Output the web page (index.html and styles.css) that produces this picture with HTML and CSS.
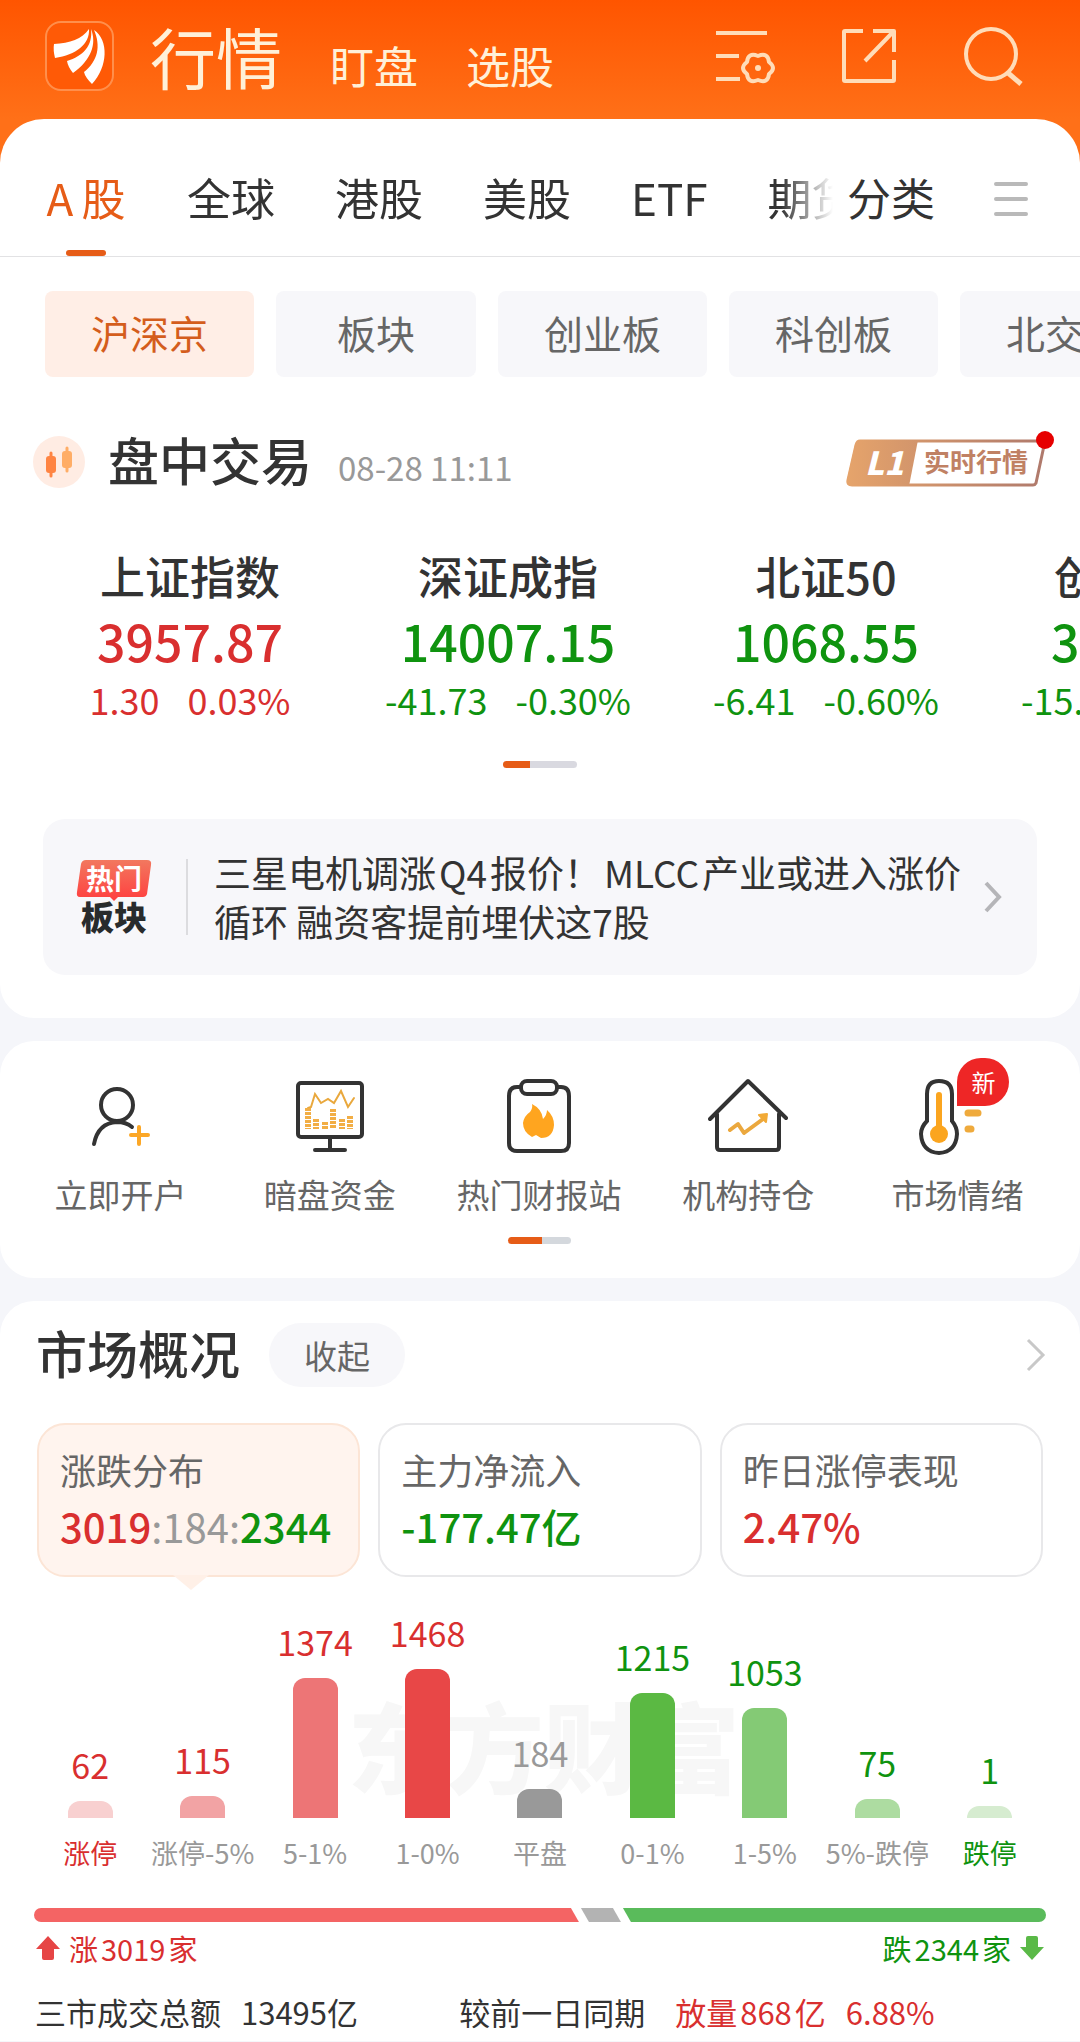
FILE: index.html
```html
<!DOCTYPE html>
<html lang="zh-CN">
<head>
  <meta charset="UTF-8" />
  <title>行情</title>
  <meta name="viewport" content="width=device-width, initial-scale=1.0"/>
  <link rel="stylesheet" href="styles.css">
</head>
<body>

  <header class="header">
    <svg class="logo" viewBox="0 0 70 70" aria-hidden="true">
      <rect x="1" y="1" width="67" height="68" rx="15" fill="#ff5a06" stroke="#ff8f4c" stroke-width="2"/>
      <path d="M9 23C25 22 37 18 44 8C45 23 31 34 10 37Q8 29 9 23Z" fill="#fff"/>
      <path d="M46 8C52 23 46 39 28 52Q23 46 22 40C38 35 48 25 46 8Z" fill="#fff"/>
      <path d="M49 9C64 19 63 46 47 63Q40 56 39 51C53 40 56 25 49 9Z" fill="#fff"/>
    </svg>
    <nav class="header-nav">
      <a class="current" href="#">行情</a>
      <a href="#">盯盘</a>
      <a href="#">选股</a>
    </nav>
    <div class="header-tools">
      <button aria-label="设置">
        <svg viewBox="0 0 60 60" fill="none" stroke="#ffdcb8" stroke-width="4">
          <path d="M1 7H52M1 30H24M1 53H25"/>
          <path d="M54 48Q53 58 43 54Q33 58 32 48Q24 42 32 36Q33 26 43 30Q53 26 54 36Q62 42 54 48Z" stroke-linejoin="round"/>
          <circle cx="43" cy="42" r="3" fill="#ffdcb8" stroke="none"/>
        </svg>
      </button>
      <button aria-label="分享">
        <svg viewBox="0 0 60 60" fill="none" stroke="#ffdcb8" stroke-width="4" stroke-linejoin="round">
          <path d="M24 5H6Q5 5 5 6V54Q5 55 6 55H54Q55 55 55 54V34"/>
          <path d="M34 5H55V26M55 5L26 35"/>
        </svg>
      </button>
      <button aria-label="搜索">
        <svg viewBox="0 0 60 60" fill="none" stroke="#ffdcb8" stroke-width="4">
          <circle cx="28" cy="28" r="25"/>
          <path d="M44 46L58 58" stroke-width="5"/>
        </svg>
      </button>
    </div>
  </header>

  <main>
    <section class="panel panel-index">
      <div class="tabs">
        <nav class="tabs-scroll">
          <a class="active" href="#"><span class="latin">A</span>股</a>
          <a href="#">全球</a>
          <a href="#">港股</a>
          <a href="#">美股</a>
          <a href="#">ETF</a>
          <a href="#">期货</a>
        </nav>
        <a href="#">分类</a>
        <button class="tabs-menu" aria-label="菜单">
          <svg viewBox="0 0 34 36" stroke="#b9b9b9" stroke-width="4" stroke-linecap="round">
            <path d="M2 3H32M2 18H32M2 33H32"/>
          </svg>
        </button>
      </div>

      <div class="chips">
        <button class="chip on">沪深京</button>
        <button class="chip">板块</button>
        <button class="chip">创业板</button>
        <button class="chip">科创板</button>
        <button class="chip">北交所</button>
      </div>

      <div class="session">
        <svg class="session-icon" viewBox="0 0 52 52" aria-hidden="true">
          <circle cx="26" cy="26" r="26" fill="#ffece3"/>
          <path d="M18 17V40" stroke="#ff8442" stroke-width="3" stroke-linecap="round"/>
          <rect x="13" y="20" width="10" height="17" rx="3" fill="#ff8442"/>
          <path d="M34 12V35" stroke="#ffad66" stroke-width="3" stroke-linecap="round"/>
          <rect x="29" y="15" width="10" height="17" rx="3" fill="#ffad66"/>
        </svg>
        <h2>盘中交易</h2>
        <time>08-28 11:11</time>
        <a class="level" href="#" aria-label="L1 实时行情">
          <svg viewBox="0 0 210 58">
            <defs>
              <linearGradient id="gold" gradientUnits="userSpaceOnUse" x1="0" y1="0" x2="205" y2="0">
                <stop offset="0" stop-color="#e6a46b"/>
                <stop offset="1" stop-color="#ad786c"/>
              </linearGradient>
            </defs>
            <path d="M14 11H199L190 53Q189 55 187 55H6Q1 55 2 50L10 15Q11 11 14 11Z" fill="none" stroke="url(#gold)" stroke-width="3"/>
            <path d="M14 10H72L63 56H6Q0 56 1 50L9 15Q11 10 14 10Z" fill="url(#gold)"/>
            <text x="19" y="45" class="level-mark">L1</text>
            <text x="78" y="42" class="level-text">实时行情</text>
            <circle cx="199" cy="10" r="9" fill="#e60000"/>
          </svg>
        </a>
      </div>

      <div class="indexes">
        <a class="index up" href="#">
          <h3>上证指数</h3>
          <strong>3957.87</strong>
          <p><span>1.30</span><span>0.03%</span></p>
        </a>
        <a class="index down" href="#">
          <h3>深证成指</h3>
          <strong>14007.15</strong>
          <p><span>-41.73</span><span>-0.30%</span></p>
        </a>
        <a class="index down" href="#">
          <h3>北证50</h3>
          <strong>1068.55</strong>
          <p><span>-6.41</span><span>-0.60%</span></p>
        </a>
        <a class="index down" href="#">
          <h3>创业板指</h3>
          <strong>3400.00</strong>
          <p><span>-15.00</span><span>-0.40%</span></p>
        </a>
      </div>
      <div class="pager"></div>

      <a class="hot" href="#">
        <svg class="hot-logo" viewBox="0 0 76 76" role="img" aria-label="热门板块">
          <defs>
            <linearGradient id="hot" x1="0" y1="0" x2="0" y2="1">
              <stop offset="0" stop-color="#f2785f"/>
              <stop offset="1" stop-color="#ff3f3f"/>
            </linearGradient>
          </defs>
          <path d="M10 1H71Q76 1 75 6L71 35Q70 38 67 38H42L38 42L34 38H4Q0 38 1 33L5 5Q6 1 10 1Z" fill="url(#hot)"/>
          <text x="10" y="31" class="hot-top">热门</text>
          <text x="5" y="71" class="hot-bottom">板块</text>
        </svg>
        <p>三星电机调涨<span class="num">Q4</span>报价！<span class="num">MLCC</span>产业或进入涨价循环 融资客提前埋伏这7股</p>
        <svg class="arrow" viewBox="0 0 20 34" fill="none" stroke="#b5b5b8" stroke-width="4"><path d="M3 3L16 17L3 31"/></svg>
      </a>
    </section>

    <section class="panel panel-quick">
      <div class="quick">
        <a href="#">
          <svg viewBox="0 0 80 80" fill="none" stroke="#333" stroke-width="4" stroke-linecap="round">
            <circle cx="36" cy="28" r="16"/>
            <path d="M13 67Q17 46 36 45Q45 45 51 50"/>
            <path d="M58 50V67M50 58H67" stroke="#fca726" stroke-width="4"/>
          </svg>
          立即开户
        </a>
        <a href="#">
          <svg viewBox="0 0 80 80" fill="none" stroke="#333" stroke-width="4" stroke-linecap="round">
            <rect x="8" y="6" width="64" height="54" rx="3"/>
            <path d="M40 60V72M25 73H55"/>
            <path d="M18 31L21 30L25 17L31 26L38 22L44 26L51 14L58 30L64 21" stroke="#e9a83d" stroke-width="2"/>
            <path d="M18 31V52M26 42V52M35 45V52M43 32V52M52 42V52M60 39V52" stroke="#f2ae45" stroke-width="6" stroke-linecap="butt" stroke-dasharray="3 1"/>
          </svg>
          暗盘资金
        </a>
        <a href="#">
          <svg viewBox="0 0 80 80" fill="none" stroke="#333" stroke-width="4">
            <path d="M23 10H18Q10 10 10 19V66Q10 74 18 74H62Q70 74 70 66V19Q70 10 62 10H57"/>
            <rect x="22" y="4" width="36" height="13" rx="6"/>
            <path d="M33 27Q43 32 44 42Q48 38 48 33Q55 39 55 48Q54 61 42 61L37 58L33 60Q24 55 24 46Q25 39 31 35Q34 31 33 27Z" fill="#ffa51f" stroke="none"/>
          </svg>
          热门财报站
        </a>
        <a href="#">
          <svg viewBox="0 0 80 80" fill="none" stroke="#333" stroke-width="4" stroke-linecap="round" stroke-linejoin="round">
            <path d="M2 42L40 4L78 41M9 37V70Q9 73 12 73H68Q71 73 71 70V37"/>
            <path d="M22 53L30 47L36 56L55 42" stroke="#eba83e"/>
            <path d="M51 38L59 37L58 45Z" fill="#f2aa36" stroke="#f2aa36" stroke-width="2"/>
          </svg>
          机构持仓
        </a>
        <a href="#">
          <svg viewBox="0 0 80 80" fill="none" stroke="#333" stroke-width="4" stroke-linecap="round">
            <path d="M10 17Q10 4 22 4Q35 4 35 17V44Q40 50 40 57Q39 75 22 76Q5 75 4 57Q4 50 10 44Z"/>
            <path d="M22 18V55" stroke="#fba51f" stroke-width="6"/>
            <circle cx="22" cy="57" r="9" fill="#fba51f" stroke="none"/>
            <path d="M51 36H61M51 52H54" stroke="#efaa3c" stroke-width="7"/>
          </svg>
          市场情绪
          <em class="new">新</em>
        </a>
      </div>
      <div class="pager pager-half"></div>
    </section>

    <section class="panel panel-market">
      <div class="market-head">
        <h2>市场概况</h2>
        <button class="fold">收起</button>
        <a class="more" href="#" aria-label="更多">
          <svg class="arrow" viewBox="0 0 20 34" fill="none" stroke="#c8c8c8" stroke-width="3"><path d="M2 2L17 17L2 32"/></svg>
        </a>
      </div>

      <div class="cards">
        <button class="card selected">
          <span>涨跌分布</span>
          <b><i class="up">3019</i><i class="flat">:184:</i><i class="down">2344</i></b>
        </button>
        <button class="card">
          <span>主力净流入</span>
          <b class="down">-177.47亿</b>
        </button>
        <button class="card">
          <span>昨日涨停表现</span>
          <b class="up">2.47%</b>
        </button>
      </div>

      <div class="chart">
        <div class="watermark" aria-hidden="true">东方财富</div>
        <div class="col up edge"><b>62</b><div class="bar r1" style="height:17px"></div><span>涨停</span></div>
        <div class="col up"><b>115</b><div class="bar r2" style="height:22px"></div><span>涨停-5%</span></div>
        <div class="col up"><b>1374</b><div class="bar r3" style="height:140px"></div><span>5-1%</span></div>
        <div class="col up"><b>1468</b><div class="bar r4" style="height:149px"></div><span>1-0%</span></div>
        <div class="col flat"><b>184</b><div class="bar r0" style="height:29px"></div><span>平盘</span></div>
        <div class="col down"><b>1215</b><div class="bar g4" style="height:125px"></div><span>0-1%</span></div>
        <div class="col down"><b>1053</b><div class="bar g3" style="height:110px"></div><span>1-5%</span></div>
        <div class="col down"><b>75</b><div class="bar g2" style="height:19px"></div><span>5%-跌停</span></div>
        <div class="col down edge"><b>1</b><div class="bar g1" style="height:12px"></div><span>跌停</span></div>
      </div>

      <div class="ratio">
        <div class="ratio-up" style="flex-grow:3019"></div>
        <div class="ratio-flat"></div>
        <div class="ratio-down" style="flex-grow:2344"></div>
      </div>
      <div class="ratio-text">
        <p class="up">
          <svg viewBox="0 0 26 26"><path d="M13 1L25 14H19V23Q19 25 17 25H9Q7 25 7 23V14H1Z" fill="#e64545"/></svg>
          <span>涨<span class="num">3019</span>家</span>
        </p>
        <p class="down">
          <span>跌<span class="num">2344</span>家</span>
          <svg viewBox="0 0 26 26"><path d="M13 25L25 12H19V3Q19 1 17 1H9Q7 1 7 3V12H1Z" fill="#5ab947"/></svg>
        </p>
      </div>

      <div class="volume">
        <p><span>三市成交总额</span><span>13495亿</span></p>
        <p><span>较前一日同期</span><span class="up change">放量<span class="num">868</span>亿</span><span class="up">6.88%</span></p>
      </div>
    </section>
  </main>

</body>
</html>
```

FILE: styles.css
```css
* {
  box-sizing: border-box;
}

body {
  margin: 0;
  background: #f5f6fa;
  color: #333;
  font-family: "Noto Sans CJK SC", "Noto Sans", sans-serif;
  overflow-x: hidden;
}

h2, h3, p {
  margin: 0;
}

h2 {
  padding-bottom: 6px;
  font-size: 51px;
  font-weight: 500;
  line-height: 58px;
}

a {
  color: inherit;
  text-decoration: none;
}

button {
  padding: 0;
  border: none;
  background: none;
  color: inherit;
  font: inherit;
  cursor: pointer;
}

svg {
  display: block;
  flex: none;
}

i {
  font-style: normal;
}

.up {
  color: #d92f2f;
}

.down {
  color: #0f930f;
}

.flat {
  color: #999;
}

/* 中文里的数字和字母两侧留白 */
.num {
  margin: 0 3px;
}

/* 顶部 */
.header {
  display: flex;
  align-items: flex-start;
  height: 165px;
  padding: 21px 57px 0 45px;
  background: linear-gradient(#ff5500, #ff7018 119px);
  color: #fff0d8;
}

.logo {
  width: 70px;
  height: 70px;
}

.header-nav {
  display: flex;
  align-items: baseline;
  gap: 48px;
  margin-left: 35px;
  font-size: 44px;
  line-height: 68px;
}

.header-nav .current {
  font-size: 66px;
}

.header-tools {
  display: flex;
  gap: 64px;
  margin: 5px 0 0 auto;
}

.header-tools svg {
  width: 60px;
  height: 60px;
}

.panel {
  margin-bottom: 23px;
  border-radius: 34px;
  background: #fff;
}

.panel-index {
  margin-top: -46px;
  padding-bottom: 43px;
  border-radius: 44px 44px 34px 34px;
}

/* 市场标签 */
.tabs {
  display: flex;
  height: 138px;
  padding: 46px 52px 0 0;
  border-bottom: 1px solid #e2e2e4;
  font-size: 44px;
  line-height: 64px;
}

.tabs-scroll {
  display: flex;
  flex: 1;
  gap: 60px;
  min-width: 0;
  margin-right: 14px;
  padding-left: 45px;
  overflow: hidden;
  white-space: nowrap;
  -webkit-mask-image: linear-gradient(to right, #000 calc(100% - 52px), transparent);
  mask-image: linear-gradient(to right, #000 calc(100% - 52px), transparent);
}

.tabs-scroll a {
  flex: none;
}

.tabs .active {
  display: flex;
  flex-wrap: wrap;
  align-content: space-between;
  justify-content: center;
  max-width: 82px;
  color: #e65c17;
}

.tabs .active::after {
  content: "";
  width: 40px;
  height: 6px;
  margin: 0 20px;
  border-radius: 3px;
  background: #e65c17;
}

.latin {
  margin-right: 8px;
}

.tabs-menu {
  align-self: flex-start;
  margin: 16px 0 0 59px;
}

.tabs-menu svg {
  width: 34px;
  height: 36px;
}

.chips {
  display: flex;
  gap: 22px;
  padding: 34px 0 0 45px;
  overflow: hidden;
}

.chip {
  flex: none;
  min-width: 200px;
  height: 86px;
  padding: 0 46px 4px;
  border-radius: 8px;
  background: #f7f7fa;
  color: #666;
  font-size: 39px;
}

.chip.on {
  background: #ffeee6;
  color: #d45d1c;
}

/* 盘中交易 */
.session {
  display: flex;
  align-items: center;
  padding: 53px 24px 0 33px;
}

.session-icon {
  width: 52px;
  height: 52px;
  margin-right: 23px;
}

.session time {
  margin: 10px 0 0 26px;
  color: #999;
  font-size: 33px;
  line-height: 50px;
}

.level {
  margin: 0 0 6px auto;
}

.level svg {
  width: 210px;
  height: 58px;
}

.level-mark {
  fill: #fff;
  font-size: 32px;
  font-weight: 900;
  font-style: italic;
}

.level-text {
  fill: #c08164;
  font-size: 26px;
  font-weight: 700;
}

.indexes {
  display: flex;
  padding: 52px 0 0 31px;
  overflow: hidden;
}

.index {
  flex: none;
  width: 318px;
  text-align: center;
}

.index h3 {
  color: #333;
  font-size: 45px;
  font-weight: 500;
  line-height: 60px;
}

.index strong {
  display: block;
  font-size: 50px;
  font-weight: 500;
  line-height: 68px;
}

.index p {
  display: flex;
  justify-content: center;
  gap: 28px;
  font-size: 36px;
  line-height: 50px;
}

.pager {
  width: 74px;
  height: 7px;
  margin: 37px auto 0;
  border-radius: 4px;
  background: linear-gradient(to right, #e65c17 27px, #d9d9e0 27px);
}

.hot {
  display: flex;
  align-items: center;
  margin: 51px 43px 0;
  padding: 29px 34px 29px 33px;
  border-radius: 22px;
  background: #f7f7fa;
}

.hot-logo {
  width: 76px;
  height: 76px;
}

.hot-top {
  fill: #fff;
  font-size: 28px;
  font-weight: 700;
}

.hot-bottom {
  fill: #282b2c;
  font-size: 33px;
  font-weight: 900;
}

.hot p {
  flex: 1;
  margin: 0 10px 0 34px;
  padding-left: 28px;
  background: linear-gradient(#dcdcdf, #dcdcdf) left center / 2px 76px no-repeat;
  font-size: 37px;
  line-height: 49px;
}

.arrow {
  width: 20px;
  height: 34px;
}

/* 快捷入口 */
.panel-quick {
  padding: 36px 18px 34px 16px;
}

.quick {
  display: grid;
  grid-template-columns: repeat(5, 1fr);
}

.quick a {
  position: relative;
  display: flex;
  flex-direction: column;
  align-items: center;
  gap: 12px;
  color: #666;
  font-size: 33px;
  line-height: 50px;
  white-space: nowrap;
}

.quick svg {
  width: 80px;
  height: 80px;
}

.new {
  position: absolute;
  left: 50%;
  top: -19px;
  width: 52px;
  height: 48px;
  border-radius: 26px 26px 26px 0;
  background: #ee2626;
  color: #fff;
  font-size: 24px;
  font-style: normal;
  line-height: 48px;
  text-align: center;
}

.pager-half {
  width: 63px;
  margin-top: 18px;
  background: linear-gradient(to right, #e65c17 34px, #d4d8dd 34px);
}

/* 市场概况 */
.panel-market {
  margin-bottom: 0;
  padding: 22px 34px 0;
  border-radius: 34px 34px 0 0;
}

.market-head {
  display: flex;
  align-items: center;
  padding: 0 0 0 2px;
}

.fold {
  width: 136px;
  height: 64px;
  margin-left: 29px;
  border-radius: 32px;
  background: #f7f7fa;
  color: #666;
  font-size: 33px;
}

.more {
  margin-left: auto;
}

.cards {
  display: grid;
  grid-template-columns: repeat(3, 1fr);
  gap: 18px;
  padding: 36px 3px 0;
}

.card {
  position: relative;
  display: flex;
  flex-direction: column;
  align-items: flex-start;
  height: 154px;
  padding: 17px 21px;
  border: 2px solid #e8e8ea;
  border-radius: 28px;
  white-space: nowrap;
}

.card span {
  color: #666;
  font-size: 36px;
  line-height: 54px;
}

.card b {
  font-size: 40px;
  font-weight: 500;
  line-height: 60px;
}

.card .flat {
  font-weight: 400;
}

.card.selected {
  border-color: #fce5d6;
  background: #fff4ee;
}

.card.selected::after {
  content: "";
  position: absolute;
  left: calc(50% - 26px);
  top: 100%;
  border: solid transparent;
  border-width: 15px 18px 0;
  border-top-color: #fff0e7;
}

.chart {
  position: relative;
  display: grid;
  grid-template-columns: repeat(9, 1fr);
  align-items: end;
  height: 296px;
}

.watermark {
  position: absolute;
  left: 31%;
  top: 96px;
  color: #f7f7f7;
  font-size: 98px;
  font-weight: 900;
  line-height: 140px;
  white-space: nowrap;
}

.col {
  position: relative;
  display: flex;
  flex-direction: column;
  align-items: center;
  white-space: nowrap;
}

.col b {
  margin-bottom: 16px;
  font-size: 34px;
  font-weight: 400;
  line-height: 40px;
}

.col span {
  margin-top: 15px;
  color: #999;
  font-size: 27px;
  line-height: 40px;
}

.col.edge span {
  color: inherit;
}

.bar {
  width: 45px;
  border-radius: 12px 12px 0 0;
}

.r0 { background: #999; }
.r1 { background: #f8d0d0; }
.r2 { background: #f2a3a4; }
.r3 { background: #ed7576; }
.r4 { background: #e84747; }
.g1 { background: #d6ecd0; }
.g2 { background: #addca1; }
.g3 { background: #84ca75; }
.g4 { background: #5bb943; }

.ratio {
  display: flex;
  height: 14px;
  margin-top: 35px;
  border-radius: 7px;
  overflow: hidden;
}

.ratio-up {
  background: #f46464;
  clip-path: polygon(0 0, calc(100% - 8px) 0, 100% 100%, 0 100%);
}

.ratio-flat {
  width: 40px;
  margin: 0 2px;
  background: #b3b3b3;
  clip-path: polygon(0 0, 32px 0, 100% 100%, 8px 100%);
}

.ratio-down {
  background: #5abb5b;
  clip-path: polygon(0 0, 100% 0, 100% 100%, 8px 100%);
}

.ratio-text {
  display: flex;
  justify-content: space-between;
  padding: 6px 1px 0;
  font-size: 29px;
  line-height: 40px;
}

.ratio-text p {
  display: flex;
  align-items: center;
  gap: 8px;
}

.ratio-text svg {
  width: 26px;
  height: 26px;
}

.volume {
  display: grid;
  grid-template-columns: 42% 1fr;
  padding: 22px 1px 7px;
  font-size: 31px;
  line-height: 44px;
  white-space: nowrap;
}

.volume p {
  display: flex;
  gap: 20px;
}

.change {
  margin-left: 10px;
}
```
